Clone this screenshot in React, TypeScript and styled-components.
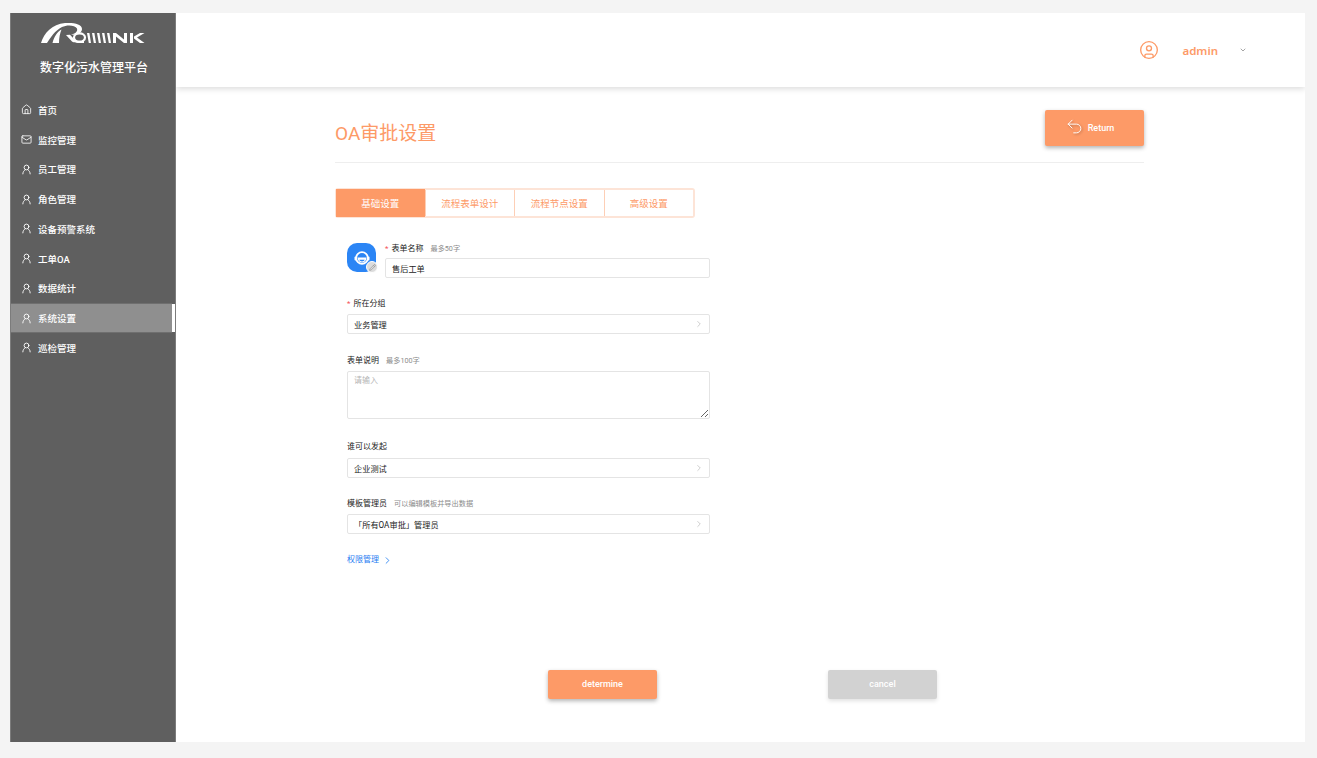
import React from 'react';
import styled, { createGlobalStyle } from 'styled-components';
import { ChevronDown, ChevronRight, CircleUser, Home, Mail, Pencil, Undo2 } from 'lucide-react';

const accent = '#fd9a67';

const GlobalStyle = createGlobalStyle`
  html, body {
    margin: 0;
    height: 100%;
    background: #f4f4f4;
    overflow: hidden;
    font-family: Roboto, "Noto Sans CJK SC", sans-serif;
  }
  * { box-sizing: border-box; }
`;

const SPage = styled.div`
  width: 1317px;
  height: 758px;
  padding: 13px 12px 16px 10px;
`;

const SFrame = styled.div`
  height: 100%;
  display: grid;
  grid-template-columns: 166px 1fr;
  background: #fff;
  overflow: hidden;
`;

const SSidebar = styled.aside`
  position: relative;
  z-index: 1;
  background: #5f5f5f;
  border-left: 1px solid #7c7c7c;
  border-right: 1px solid #7c7c7c;
  color: #fff;
`;

const SBrand = styled.div`
  height: 82px;
  padding-top: 9px;
  display: flex;
  flex-direction: column;
  align-items: center;
  gap: 14px;
`;

const SBrandName = styled.div`
  margin-left: 2px;
  font-size: 12px;
  line-height: 16px;
  font-weight: 500;
  color: #fff;
`;

const SNav = styled.nav`
  display: flex;
  flex-direction: column;
`;

const SNavItem = styled.div<{ $active?: boolean }>`
  height: 29.75px;
  display: flex;
  align-items: center;
  gap: 6px;
  padding-left: 10px;
  font-size: 9.5px;
  font-weight: 500;
  position: relative;
  background: ${(p) => (p.$active ? '#8f8f8f' : 'transparent')};
  margin-right: ${(p) => (p.$active ? '3px' : '0')};
  ${(p) => p.$active && 'border-top: 1px solid #6f6f6f; border-bottom: 1px solid #6f6f6f;'}
`;

const SActiveBar = styled.span`
  position: absolute;
  top: 0;
  bottom: 0;
  right: -3px;
  width: 3px;
  background: #fff;
`;

const SMain = styled.div`
  display: flex;
  flex-direction: column;
  min-width: 0;
`;

const SHeader = styled.header`
  height: 74px;
  flex: none;
  display: flex;
  align-items: center;
  justify-content: flex-end;
  padding-right: 58px;
  background: #fff;
  box-shadow: 0 2px 6px rgba(0, 0, 0, 0.14);
  color: ${accent};
`;

const SUserName = styled.span`
  margin-left: 23px;
  margin-right: 21px;
  font-size: 11.5px;
  font-weight: 600;
  font-family: "Noto Sans", sans-serif;
`;

const SContent = styled.main`
  flex: 1;
  display: flex;
  flex-direction: column;
  padding: 23px 161px 0 159px;
`;

const STitleRow = styled.div`
  height: 53px;
  display: flex;
  align-items: flex-start;
  justify-content: space-between;
  border-bottom: 1px solid #eeeeee;
`;

const STitle = styled.h1`
  margin: 12px 0 0;
  font-size: 19px;
  line-height: 24px;
  font-weight: 400;
  color: ${accent};
`;

const SButton = styled.button`
  display: inline-flex;
  align-items: center;
  justify-content: center;
  border: 0;
  border-radius: 2px;
  color: #fff;
  font-family: Roboto, sans-serif;
  font-size: 9px;
  font-weight: 500;
  background: ${accent};
  box-shadow: 0 2px 4px rgba(0, 0, 0, 0.3);
`;

const SReturnButton = styled(SButton)`
  width: 99px;
  height: 36px;
  gap: 4px;
  padding: 0 10px 0 0;
  svg {
    margin-top: -3px;
    filter: drop-shadow(1px 1px 1px rgba(0, 0, 0, 0.3));
  }
`;

const SActionButton = styled(SButton)<{ $muted?: boolean }>`
  width: 109px;
  height: 29px;
  padding-bottom: 2px;
  background: ${(p) => (p.$muted ? '#d2d2d2' : accent)};
  box-shadow: ${(p) => (p.$muted ? '0 2px 4px rgba(0, 0, 0, 0.12)' : '0 2px 4px rgba(0, 0, 0, 0.3)')};
`;

const STabs = styled.div`
  display: flex;
  width: 360px;
  height: 30px;
  margin-top: 25px;
  border: 2px solid #fde4d7;
  border-radius: 3px;
`;

const STab = styled.div<{ $active?: boolean }>`
  flex: 1;
  display: flex;
  align-items: center;
  justify-content: center;
  font-size: 9.5px;
  color: ${(p) => (p.$active ? '#fff' : accent)};
  background: ${(p) => (p.$active ? accent : '#fff')};
  ${(p) => p.$active && 'margin: -1px 0 -1px -1px;'}
  & + & {
    border-left: 1px solid #fdcfb6;
  }
`;

const SForm = styled.form`
  width: 363px;
  margin: 24px 0 0 12px;
  display: flex;
  flex-direction: column;
`;

const SNameRow = styled.div`
  display: flex;
  gap: 9px;
  margin-bottom: 19px;
`;

const SAppIcon = styled.div`
  position: relative;
  flex: none;
  width: 29px;
  height: 29px;
  margin-top: 1px;
  display: flex;
  align-items: center;
  justify-content: center;
  border-radius: 10px;
  background: #2b85f5;
`;

const SEditBadge = styled.span`
  position: absolute;
  right: -2px;
  bottom: -1px;
  width: 12px;
  height: 12px;
  display: flex;
  align-items: center;
  justify-content: center;
  border-radius: 50%;
  background: #dcdcdc;
  border: 1px solid #fff;
  color: #8a8a8a;
`;

const SField = styled.div<{ $gap?: number }>`
  flex: 1;
  display: flex;
  flex-direction: column;
  margin-bottom: ${(p) => p.$gap ?? 0}px;
`;

const SLabel = styled.div<{ $gap?: number }>`
  height: 13px;
  margin-bottom: ${(p) => p.$gap ?? 4}px;
  display: flex;
  align-items: center;
  font-size: 8px;
  line-height: 13px;
  color: #222;
`;

const SRequired = styled.span`
  color: #f5555a;
  margin-right: 3px;
`;

const SHint = styled.span`
  margin-left: 7px;
  font-size: 7.2px;
  color: #8c8c8c;
`;

const SBox = styled.div`
  height: 20px;
  display: flex;
  align-items: center;
  justify-content: space-between;
  padding: 0 5px 0 6px;
  background: #fff;
  border: 1px solid #e4e4e4;
  border-radius: 2px;
  font-size: 8.2px;
  color: #222;
`;

const STextarea = styled.textarea`
  display: block;
  width: 100%;
  height: 48px;
  padding: 3px 6px;
  border: 1px solid #e4e4e4;
  border-radius: 2px;
  outline: none;
  font-family: inherit;
  font-size: 8px;
  line-height: 12px;
  &::placeholder {
    color: #b5b5b5;
  }
`;

const SLink = styled.a`
  margin-top: 20px;
  display: flex;
  align-items: center;
  gap: 3px;
  font-size: 8px;
  line-height: 12px;
  color: #1f7df2;
`;

const SActions = styled.div`
  margin-top: 104px;
  padding-left: 213px;
  display: flex;
  gap: 171px;
`;

const navItems = ['首页', '监控管理', '员工管理', '角色管理', '设备预警系统', '工单OA', '数据统计', '系统设置', '巡检管理'];

const NavIcon = ({ index }: { index: number }) => {
  if (index === 0) return <Home size={11} strokeWidth={1.8} />;
  if (index === 1) return <Mail size={11} strokeWidth={1.8} />;
  return (
    <svg width="11" height="11" viewBox="0 0 12 12" fill="none" stroke="currentColor" strokeWidth="1" strokeLinecap="round">
      <circle cx="6" cy="3.8" r="2.6" />
      <path d="M2 10.800C2.100 8.600 3.200 7.200 4.500 6.400M10 10.800C9.900 8.600 8.800 7.200 7.500 6.400" />
    </svg>
  );
};

const Logo = () => (
  <svg width="104" height="24" viewBox="0 0 104 24" fill="#fff">
    <path d="M0 21C3 11 11 2 24 1C33 .4 41 2 41 7C41 11 36 13.500 30 12.500C34 12 37 9.500 36 6.500C34 3 26 2.500 21 5C14 8.500 10 15 6 21Z" />
    <path d="M11.500 21C13 15 16 10 20.500 7.500C19 11 18 16 18 21Z" />
    <path d="M25 13L31 19.500C33 21 36 21 43 21V19C37 19 35 19 33 17L29 12.800Z" />
    <ellipse cx="38.500" cy="15.500" rx="5.500" ry="4.200" fill="none" stroke="#fff" strokeWidth="2.200" />
    <path d="M46 11h2.400l1.600 10h-2.200zM51 11h2.400l1.600 10h-2.200zM56 11h2.400l1.600 10h-2.200zM61 11h2.400l1.600 10h-2.200zM66 11h2.400l1.600 10h-2.200z" />
    <path d="M72 11h3l8 6.500V11h3v10h-3l-8-6.500V21h-3z" />
    <path d="M89 11h3v10h-3zM103.500 11l-7.500 4.500 7.500 5.500h-4.500l-6-4.500v-2l6-3.500z" />
  </svg>
);

type FieldProps = { label: string; hint?: string; value: string; required?: boolean; gap: number; labelGap?: number };

const Field = ({ label, hint, value, required, gap, labelGap }: FieldProps) => (
  <SField $gap={gap}>
    <SLabel $gap={labelGap}>
      {required && <SRequired>*</SRequired>}
      {label}
      {hint && <SHint>{hint}</SHint>}
    </SLabel>
    <SBox>
      {value}
      <ChevronRight size={10} strokeWidth={1.5} color="#b0b0b0" />
    </SBox>
  </SField>
);

export default function App() {
  return (
    <SPage>
      <GlobalStyle />
      <SFrame>
        <SSidebar>
          <SBrand>
            <Logo />
            <SBrandName>数字化污水管理平台</SBrandName>
          </SBrand>
          <SNav>
            {navItems.map((item, index) => (
              <SNavItem key={item} $active={item === '系统设置'}>
                <NavIcon index={index} />
                {item}
                {item === '系统设置' && <SActiveBar />}
              </SNavItem>
            ))}
          </SNav>
        </SSidebar>
        <SMain>
          <SHeader>
            <CircleUser size={20} strokeWidth={1.6} />
            <SUserName>admin</SUserName>
            <ChevronDown size={8} color="#777" />
          </SHeader>
          <SContent>
            <STitleRow>
              <STitle>OA审批设置</STitle>
              <SReturnButton>
                <Undo2 size={19} strokeWidth={1.2} />
                Return
              </SReturnButton>
            </STitleRow>
            <STabs>
              <STab $active>基础设置</STab>
              <STab>流程表单设计</STab>
              <STab>流程节点设置</STab>
              <STab>高级设置</STab>
            </STabs>
            <SForm>
              <SNameRow>
                <SAppIcon>
                  <svg width="18" height="16" viewBox="0 0 18 16">
                    <circle cx="9" cy="8" r="5.800" fill="none" stroke="#fff" strokeWidth="1.800" />
                    <rect x="1.500" y="6.500" width="2.200" height="4" rx="1" fill="#fff" />
                    <rect x="14.300" y="6.500" width="2.200" height="4" rx="1" fill="#fff" />
                    <path d="M4.500 7.500h9c-.3 3.500-2 5-4.500 5s-4.200-1.500-4.500-5z" fill="#fff" />
                    <path d="M6.300 9.800h5.400c-.5 1.200-1.500 1.700-2.700 1.700s-2.200-.5-2.700-1.700z" fill="#2b85f5" />
                  </svg>
                  <SEditBadge>
                    <Pencil size={7} strokeWidth={2} />
                  </SEditBadge>
                </SAppIcon>
                <SField>
                  <SLabel $gap={3}>
                    <SRequired>*</SRequired>
                    表单名称
                    <SHint>最多50字</SHint>
                  </SLabel>
                  <SBox>售后工单</SBox>
                </SField>
              </SNameRow>
              <Field label="所在分组" value="业务管理" required gap={20} />
              <SField $gap={21}>
                <SLabel>
                  表单说明
                  <SHint>最多100字</SHint>
                </SLabel>
                <STextarea placeholder="请输入" />
              </SField>
              <Field label="谁可以发起" value="企业测试" gap={19} labelGap={5} />
              <Field label="模板管理员" hint="可以编辑模板并导出数据" value="「所有OA审批」管理员" gap={0} />
              <SLink>
                权限管理
                <ChevronRight size={11} strokeWidth={1.8} />
              </SLink>
            </SForm>
            <SActions>
              <SActionButton>determine</SActionButton>
              <SActionButton $muted>cancel</SActionButton>
            </SActions>
          </SContent>
        </SMain>
      </SFrame>
    </SPage>
  );
}
